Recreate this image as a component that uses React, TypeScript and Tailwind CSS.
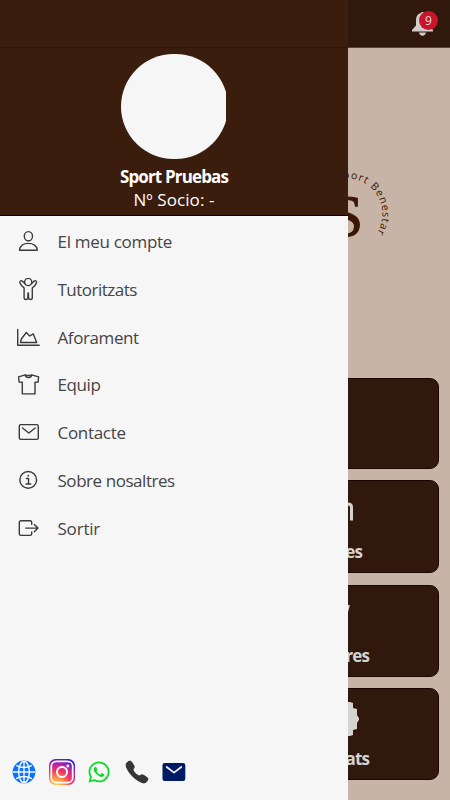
import type { ReactNode } from 'react';
import { IoCall, IoLogoWhatsapp } from 'react-icons/io5';

const FONT = "font-['Open_Sans','Noto_Sans',sans-serif]";

function LineIcon({ children }: { children: ReactNode }) {
    return (
        <svg
            viewBox="0 0 24 24"
            className="h-6 w-6 shrink-0"
            fill="none"
            stroke="#3a3a3a"
            strokeWidth="1.4"
            strokeLinecap="round"
            strokeLinejoin="round"
        >
            {children}
        </svg>
    );
}

const MENU: { label: string; tracking: string; icon: ReactNode }[] = [
    {
        label: 'El meu compte',
        tracking: 'tracking-[-0.3px]',
        icon: (
            <>
                <ellipse cx="12.4" cy="6.2" rx="4.1" ry="4.6" />
                <path d="M4 20.300c-.4 0-.6-.3-.5-.7.9-4 4.400-6.200 8.900-6.200s8 2.200 8.900 6.200c.1.400-.1.700-.5.700z" />
            </>
        ),
    },
    {
        label: 'Tutoritzats',
        tracking: 'tracking-[-0.5px]',
        icon: (
            <>
                <circle cx="12.2" cy="4" r="3.600" />
                <path d="M8.800 5.600 6.200 3c-1-.9-2.900.4-2.300 1.800.7 2 2.100 3.900 4.200 5V20c0 2 3.500 2 3.700.1l.2-5.100h.4l.2 5.100c.2 1.900 3.700 1.900 3.700-.1V9.800c2.100-1.100 3.500-3 4.200-5 .6-1.400-1.300-2.700-2.300-1.800l-2.600 2.600" />
            </>
        ),
    },
    {
        label: 'Aforament',
        tracking: 'tracking-[-0.4px]',
        icon: (
            <>
                <path d="M1.700 3.500v15.700h21.500" />
                <path d="M4.500 16.500 5.300 13l5-6.500 3.400 3.500 3.600-2.100 3.400 8.600z" />
            </>
        ),
    },
    {
        label: 'Equip',
        tracking: 'tracking-[-0.4px]',
        icon: (
            <>
                <path d="M9.200 1.900 2.600 3.800l.5 5.200 3.200.3v11.600H19V9.300l3.100-.3.500-5.200-6.900-1.900c-1.500.5-5 .5-6.500 0z" />
                <path d="M9.200 2.100c.6 3.200 6 3.200 6.500 0" />
            </>
        ),
    },
    {
        label: 'Contacte',
        tracking: 'tracking-[-0.3px]',
        icon: (
            <>
                <rect x="3.300" y="3.600" width="19" height="14.800" rx="1.600" />
                <path d="m6.500 7 6.300 5 6.400-5" />
            </>
        ),
    },
    {
        label: 'Sobre nosaltres',
        tracking: 'tracking-[-0.45px]',
        icon: (
            <>
                <circle cx="12.200" cy="10.900" r="8.400" />
                <path d="M10.500 9.500h2v5.400M10 15h4.700" />
                <circle cx="12.300" cy="6.700" r=".9" fill="#3a3a3a" stroke="none" />
            </>
        ),
    },
    {
        label: 'Sortir',
        tracking: 'tracking-[-0.2px]',
        icon: (
            <>
                <path d="M15.700 7.300V5.500A1.700 1.700 0 0 0 14 3.800H5A1.700 1.700 0 0 0 3.300 5.500v11.200A1.700 1.700 0 0 0 5 18.400h9a1.700 1.700 0 0 0 1.700-1.700v-1.800" />
                <path d="M9.700 11.100h12.200M18.300 7.500l3.700 3.600-3.700 3.700" />
            </>
        ),
    },
];

function Globe() {
    return (
        <svg viewBox="0 0 24 24" className="h-6 w-6">
            <circle cx="12" cy="12" r="11.400" fill="#0a75fa" />
            <g fill="none" stroke="#f6f6f6" strokeWidth="1.400">
                <path d="M12 1v22M1 12h22M4.200 5.300c4.600 3 11 3 15.600 0M4.200 18.700c4.600-3 11-3 15.600 0" />
                <ellipse cx="12" cy="12" rx="5.300" ry="10.700" />
            </g>
        </svg>
    );
}

function Instagram() {
    return (
        <svg viewBox="0 0 26 26" className="h-[26px] w-[26px]">
            <defs>
                <radialGradient id="insta" cx="0.28" cy="1.02" r="1.1">
                    <stop offset="0" stopColor="#ffd34f" />
                    <stop offset="0.25" stopColor="#ff9a45" />
                    <stop offset="0.52" stopColor="#f7345d" />
                    <stop offset="0.75" stopColor="#b526a5" />
                    <stop offset="1" stopColor="#2a1de0" />
                </radialGradient>
            </defs>
            <rect width="26" height="26" rx="6.500" fill="url(#insta)" />
            <g fill="none" stroke="#fff">
                <rect x="2.300" y="2.300" width="21.400" height="21.400" rx="5" strokeWidth="1.800" />
                <circle cx="13" cy="13" r="5" strokeWidth="2" />
            </g>
            <circle cx="18.900" cy="7" r="1.400" fill="#fff" />
        </svg>
    );
}

function Mail() {
    return (
        <svg viewBox="0 0 24 24" className="h-6 w-6">
            <rect x="0.500" y="3" width="22.800" height="18" rx="2.200" fill="#001a63" />
            <path d="m4.700 7 7.300 5.600L19.300 7" fill="none" stroke="#f6f6f6" strokeWidth="1.700" strokeLinecap="round" strokeLinejoin="round" />
        </svg>
    );
}

function Drawer() {
    return (
        <aside className="absolute inset-y-0 left-0 flex w-[348px] flex-col bg-[#f6f6f6]">
            <div className="h-[47px] bg-[#3b1d0e]" />
            <div className="flex h-[169px] flex-col items-center border-t border-b border-t-[#321509] border-b-black bg-[#3b1d0e] pt-[6px] text-white">
                <div className="mr-px h-[105px] w-[105px] overflow-hidden">
                    <div className="h-[105px] w-[107px] rounded-full bg-[#f6f6f6]" />
                </div>
                <p className="mt-[6px] text-[17px] leading-[23px] font-bold tracking-[-0.85px]">Sport Pruebas</p>
                <p className="text-[17px] leading-[23px] tracking-[0.1px]">Nº Socio: -</p>
            </div>

            <nav className="flex flex-col pt-[2.2px]">
                {MENU.map((item) => (
                    <a key={item.label} className="flex h-[47.8px] items-center gap-[17.5px] pl-[16px] text-[#454545]">
                        <LineIcon>{item.icon}</LineIcon>
                        <span className={`text-[17px] leading-6 ${item.tracking}`}>{item.label}</span>
                    </a>
                ))}
            </nav>

            <div className="mt-auto flex items-center pb-[15px] pl-[12px]">
                <Globe />
                <span className="ml-[13px]"><Instagram /></span>
                <IoLogoWhatsapp className="ml-[12px] h-6 w-6 text-[#0bd827]" />
                <IoCall className="ml-[13px] h-[26px] w-[26px] text-[#363636]" />
                <span className="ml-[12px]"><Mail /></span>
            </div>
        </aside>
    );
}

function Card({ className, label, children }: { className: string; label?: string; children?: ReactNode }) {
    return (
        <div className={`flex flex-col items-end rounded-[9px] border border-[#180600] bg-[#30180c] text-[#d5d2d0] ${className}`}>
            {children}
            {label && <p className="mt-auto text-[17px] leading-6 font-bold tracking-[-0.9px]">{label}</p>}
        </div>
    );
}

export default function App() {
    return (
        <div className={`relative flex h-[800px] w-[450px] flex-col overflow-hidden bg-[#c7b4a6] ${FONT}`}>
            <header className="flex h-12 shrink-0 justify-end border-b border-[#5c4436] bg-[#30180c] pt-[11px] pr-[11px]">
                <div className="relative h-[26px] w-[28px]">
                    <svg viewBox="0 0 28 26" className="h-[26px] w-[28px]" fill="#d1cdca">
                        <path d="M1 20.500v-1.500L5 14.500V9c0-4 2-6.300 5-7 .3-1.400 2.700-1.400 3 0 3 .7 5 3 5 7v5.500l4 4.500v1.500zM8 21.500h7c-.3 2-1.700 3.200-3.500 3.200S8.300 23.500 8 21.500z" />
                    </svg>
                    <span className="absolute top-0 left-[8px] flex h-[19px] w-[19px] items-center justify-center rounded-full bg-[#c9152b] text-[12px] leading-none text-[#ddd]">9</span>
                </div>
            </header>

            <div className="flex h-[330px] shrink-0 justify-end pt-[112px] pr-[44px]">
                <svg viewBox="0 0 120 110" className="h-[110px] w-[120px]" fill="#3b1506">
                    <path id="ring" d="M25.500 54a35.500 35.500 0 0 1 71 0a35.500 35.500 0 0 1-71 0" fill="none" />
                    <text x="77" y="76" textAnchor="end" fontSize="60" stroke="#3b1506" strokeWidth="1" className="font-['Liberation_Serif',serif]">S</text>
                    <text fontSize="10.500" letterSpacing="1" className="font-['Open_Sans',sans-serif] font-medium">
                        <textPath href="#ring" startOffset="45">Sport Benestar</textPath>
                    </text>
                </svg>
            </div>

            <main className="flex flex-col gap-[11.3px] pr-[11px] pl-[231px]">
                <Card className="h-[91px]" />
                <Card className="h-[93px] pt-[21px] pr-[76px] pb-[8px]" label="Classes">
                    <svg viewBox="0 0 28 20" className="mr-[9px] h-5 w-7" fill="none" stroke="currentColor" strokeWidth="3">
                        <path d="M2 18.500V5q0-3 3-3h18q3.500 0 3.500 3v13.500" />
                    </svg>
                </Card>
                <Card className="h-[92px] pt-[18px] pr-[69px] pb-[8px]" label="Compres">
                    <svg viewBox="0 0 26 20" className="mr-[19px] h-5 w-[26px]" fill="currentColor">
                        <path d="M2 1h24l-2 7-3 4H4z" />
                    </svg>
                </Card>
                <Card className="h-[92px] pt-[12px] pr-[69px] pb-[8px]" label="Privats">
                    <svg viewBox="0 0 36 36" className="mr-[10px] h-9 w-9 shrink-0" fill="currentColor">
                        <path d="M8 1h19l3 1v5l4 1v6l2.500 4-2.500 4v6l-4 1v5l-3 1H8l-3-6-4-11 4-11z" />
                    </svg>
                </Card>
            </main>

            <Drawer />
        </div>
    );
}
